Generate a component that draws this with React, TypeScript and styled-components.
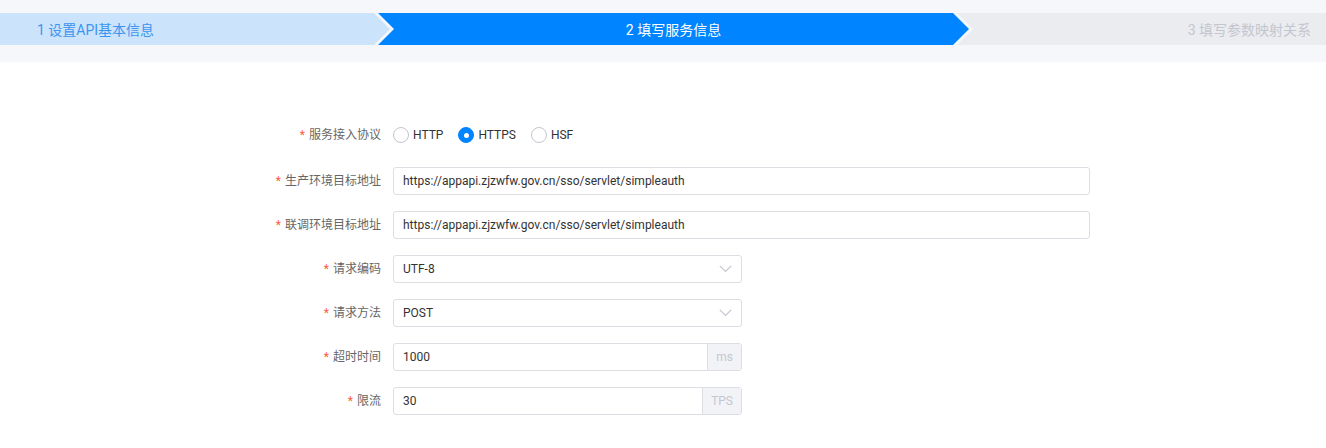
import React from "react";
import styled, { createGlobalStyle } from "styled-components";

const GlobalStyle = createGlobalStyle`
  html, body { margin: 0; padding: 0; background: #ffffff; }
  body { font-family: Roboto, "Noto Sans CJK SC", "Noto Sans", sans-serif; }
  * { box-sizing: border-box; }
`;

const Page = styled.div`
  width: 1326px;
  min-height: 448px;
  background: #ffffff;
`;

const Header = styled.div`
  background: #f6f7fa;
  padding: 13px 0 17px;
`;

const Steps = styled.div`
  display: flex;
  height: 32px;
`;

type StepKind = "done" | "current" | "wait";

const stepBg: Record<StepKind, string> = {
  done: "#cce4fb",
  current: "#0084ff",
  wait: "#ebecf0",
};
const stepColor: Record<StepKind, string> = {
  done: "#3d94f0",
  current: "#ffffff",
  wait: "#c4c6cf",
};

const Step = styled.div<{
  $kind: StepKind;
  $width: number;
  $first?: boolean;
  $last?: boolean;
  $align: "flex-start" | "center" | "flex-end";
  $padL: number;
  $padR: number;
}>`
  flex: 0 0 ${(p) => p.$width}px;
  margin-left: ${(p) => (p.$first ? 0 : -12)}px;
  height: 32px;
  display: flex;
  align-items: center;
  justify-content: ${(p) => p.$align};
  padding: 0 ${(p) => p.$padR}px 0 ${(p) => p.$padL}px;
  background: ${(p) => stepBg[p.$kind]};
  color: ${(p) => stepColor[p.$kind]};
  font-size: 14px;
  white-space: nowrap;
  clip-path: ${(p) => {
    const right = p.$last
      ? "100% 0, 100% 100%"
      : "calc(100% - 16px) 0, 100% 50%, calc(100% - 16px) 100%";
    const left = p.$first ? "0 100%" : "0 100%, 16px 50%";
    return `polygon(0 0, ${right}, ${left})`;
  }};
`;

const Form = styled.div`
  padding-top: 59px;
`;

const Item = styled.div<{ $gap: number; $h?: number }>`
  display: grid;
  grid-template-columns: 393px 697px;
  align-items: center;
  min-height: ${(p) => p.$h ?? 28}px;
  margin-bottom: ${(p) => p.$gap}px;
`;

const Label = styled.label`
  text-align: right;
  padding-right: 12px;
  font-size: 12px;
  color: #666666;
  line-height: 28px;
`;

const Star = styled.span`
  color: #ff5d3b;
  font-size: 12px;
  margin-right: 4px;
`;

const RadioGroup = styled.div`
  display: flex;
  align-items: center;
  height: 28px;
`;

const RadioOption = styled.label`
  display: flex;
  align-items: center;
  margin-right: 15px;
  font-size: 12px;
  color: #333333;
  cursor: pointer;
`;

const RadioCircle = styled.span<{ $checked?: boolean }>`
  width: 16px;
  height: 16px;
  border-radius: 50%;
  border: 1px solid ${(p) => (p.$checked ? "#0084ff" : "#c4c6cf")};
  background: ${(p) => (p.$checked ? "#0084ff" : "#ffffff")};
  display: flex;
  align-items: center;
  justify-content: center;
  margin-right: 4px;
  &::after {
    content: "";
    width: 5px;
    height: 5px;
    border-radius: 50%;
    background: #ffffff;
    display: ${(p) => (p.$checked ? "block" : "none")};
  }
`;

const Field = styled.div<{ $half?: boolean }>`
  width: ${(p) => (p.$half ? "349px" : "697px")};
  height: 28px;
  border: 1px solid #dcdee3;
  border-radius: 3px;
  display: flex;
  align-items: stretch;
  background: #ffffff;
  overflow: hidden;
`;

const Value = styled.div`
  flex: 1;
  display: flex;
  align-items: center;
  padding: 0 9px;
  font-size: 12px;
  color: #333333;
`;

const Arrow = styled.span`
  display: flex;
  align-items: center;
  padding-right: 9px;
`;

const Addon = styled.div`
  display: flex;
  align-items: center;
  padding: 0 8px;
  background: #f2f3f7;
  border-left: 1px solid #dcdee3;
  color: #c4c6cf;
  font-size: 12px;
`;

const Chevron = () => (
  <svg width="13" height="8" viewBox="0 0 13 8">
    <polyline
      points="0.8,0.8 6.5,6.5 12.2,0.8"
      fill="none"
      stroke="#c4c6cf"
      strokeWidth="1.2"
    />
  </svg>
);

const Req: React.FC<{ text: string }> = ({ text }) => (
  <Label>
    <Star>*</Star>
    {text}
  </Label>
);

export default function App() {
  return (
    <Page>
      <GlobalStyle />
      <Header>
        <Steps>
          <Step $kind="done" $width={390} $first $align="flex-start" $padL={37} $padR={0}>
            1 设置API基本信息
          </Step>
          <Step $kind="current" $width={591} $align="center" $padL={16} $padR={16}>
            2 填写服务信息
          </Step>
          <Step $kind="wait" $width={370} $last $align="flex-end" $padL={16} $padR={16}>
            3 填写参数映射关系
          </Step>
        </Steps>
      </Header>
      <Form>
        <Item $gap={18}>
          <Req text="服务接入协议" />
          <RadioGroup>
            <RadioOption>
              <RadioCircle />
              HTTP
            </RadioOption>
            <RadioOption>
              <RadioCircle $checked />
              HTTPS
            </RadioOption>
            <RadioOption>
              <RadioCircle />
              HSF
            </RadioOption>
          </RadioGroup>
        </Item>
        <Item $gap={16}>
          <Req text="生产环境目标地址" />
          <Field>
            <Value>https://appapi.zjzwfw.gov.cn/sso/servlet/simpleauth</Value>
          </Field>
        </Item>
        <Item $gap={16}>
          <Req text="联调环境目标地址" />
          <Field>
            <Value>https://appapi.zjzwfw.gov.cn/sso/servlet/simpleauth</Value>
          </Field>
        </Item>
        <Item $gap={16}>
          <Req text="请求编码" />
          <Field $half>
            <Value>UTF-8</Value>
            <Arrow>
              <Chevron />
            </Arrow>
          </Field>
        </Item>
        <Item $gap={16}>
          <Req text="请求方法" />
          <Field $half>
            <Value>POST</Value>
            <Arrow>
              <Chevron />
            </Arrow>
          </Field>
        </Item>
        <Item $gap={16}>
          <Req text="超时时间" />
          <Field $half>
            <Value>1000</Value>
            <Addon>ms</Addon>
          </Field>
        </Item>
        <Item $gap={16}>
          <Req text="限流" />
          <Field $half>
            <Value>30</Value>
            <Addon>TPS</Addon>
          </Field>
        </Item>
      </Form>
    </Page>
  );
}
